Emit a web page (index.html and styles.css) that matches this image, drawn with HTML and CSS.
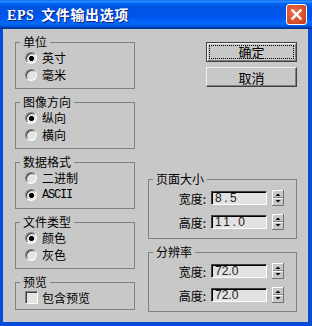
FILE: index.html
```html
<!DOCTYPE html>
<html lang="zh-CN">
<head>
    <meta charset="UTF-8">
    <meta name="viewport" content="width=device-width, initial-scale=1.0">
    <title>EPS 文件输出选项</title>
    <link rel="stylesheet" href="styles.css">
</head>
<body>
    <div class="window">
        <div class="titlebar">
            <span class="title"><span class="latin">EPS</span> 文件输出选项</span>
            <span class="close">
                <svg width="13" height="13" viewBox="0 0 13 13"><path d="M2.5 2.5 L10.5 10.5 M10.5 2.5 L2.5 10.5" stroke="#fff" stroke-width="2.4" stroke-linecap="square"/></svg>
            </span>
        </div>
        <div class="frame">
            <div class="client">
                <!-- 左侧选项 -->
                <div class="col-left">
                    <fieldset class="group">
                        <legend>单位</legend>
                        <div class="opt"><span class="radio checked"></span>英寸</div>
                        <div class="opt"><span class="radio"></span>毫米</div>
                    </fieldset>
                    <fieldset class="group">
                        <legend>图像方向</legend>
                        <div class="opt"><span class="radio checked"></span>纵向</div>
                        <div class="opt"><span class="radio"></span>横向</div>
                    </fieldset>
                    <fieldset class="group">
                        <legend>数据格式</legend>
                        <div class="opt"><span class="radio"></span>二进制</div>
                        <div class="opt"><span class="radio checked"></span><span class="mono">ASCII</span></div>
                    </fieldset>
                    <fieldset class="group">
                        <legend>文件类型</legend>
                        <div class="opt"><span class="radio checked"></span>颜色</div>
                        <div class="opt"><span class="radio"></span>灰色</div>
                    </fieldset>
                    <fieldset class="group group-last">
                        <legend>预览</legend>
                        <div class="opt"><span class="check"></span>包含预览</div>
                    </fieldset>
                </div>

                <!-- 右侧按钮和数值 -->
                <div class="col-right">
                    <div class="buttons">
                        <button class="btn btn-default"><span class="focus">确定</span></button>
                        <button class="btn">取消</button>
                    </div>
                    <div class="groups">
                        <fieldset class="group">
                            <legend>页面大小</legend>
                            <div class="field-row">
                                <span class="field-label">宽度:</span>
                                <span class="field wide">8.5</span>
                                <svg class="spin" width="12" height="16" viewBox="0 0 12 16"><rect width="12" height="16" fill="#c8c8c8"/><path d="M0.5 15V0.5H11" stroke="#fff" fill="none"/><path d="M11.5 0V15.5H0" stroke="#707070" fill="none"/><path d="M1 7.5H11" stroke="#808080"/><path d="M1 8.5H11" stroke="#fff"/><polygon points="3.5,6 8.5,6 6,3.5" fill="#000"/><polygon points="3.5,10 8.5,10 6,12.5" fill="#000"/></svg>
                            </div>
                            <div class="field-row">
                                <span class="field-label">高度:</span>
                                <span class="field wide">11.0</span>
                                <svg class="spin" width="12" height="16" viewBox="0 0 12 16"><rect width="12" height="16" fill="#c8c8c8"/><path d="M0.5 15V0.5H11" stroke="#fff" fill="none"/><path d="M11.5 0V15.5H0" stroke="#707070" fill="none"/><path d="M1 7.5H11" stroke="#808080"/><path d="M1 8.5H11" stroke="#fff"/><polygon points="3.5,6 8.5,6 6,3.5" fill="#000"/><polygon points="3.5,10 8.5,10 6,12.5" fill="#000"/></svg>
                            </div>
                        </fieldset>
                        <fieldset class="group">
                            <legend>分辨率</legend>
                            <div class="field-row">
                                <span class="field-label">宽度:</span>
                                <span class="field">72.0</span>
                                <svg class="spin" width="12" height="16" viewBox="0 0 12 16"><rect width="12" height="16" fill="#c8c8c8"/><path d="M0.5 15V0.5H11" stroke="#fff" fill="none"/><path d="M11.5 0V15.5H0" stroke="#707070" fill="none"/><path d="M1 7.5H11" stroke="#808080"/><path d="M1 8.5H11" stroke="#fff"/><polygon points="3.5,6 8.5,6 6,3.5" fill="#000"/><polygon points="3.5,10 8.5,10 6,12.5" fill="#000"/></svg>
                            </div>
                            <div class="field-row">
                                <span class="field-label">高度:</span>
                                <span class="field">72.0</span>
                                <svg class="spin" width="12" height="16" viewBox="0 0 12 16"><rect width="12" height="16" fill="#c8c8c8"/><path d="M0.5 15V0.5H11" stroke="#fff" fill="none"/><path d="M11.5 0V15.5H0" stroke="#707070" fill="none"/><path d="M1 7.5H11" stroke="#808080"/><path d="M1 8.5H11" stroke="#fff"/><polygon points="3.5,6 8.5,6 6,3.5" fill="#000"/><polygon points="3.5,10 8.5,10 6,12.5" fill="#000"/></svg>
                            </div>
                        </fieldset>
                    </div>
                </div>
            </div>
        </div>
    </div>
</body>
</html>
```

FILE: styles.css
```css
/* XP 风格对话框 */
body {
    margin: 0;
    font-family: "Noto Sans CJK SC", "Noto Sans", sans-serif;
    font-size: 12px;
    color: #000;
}
.window {
    width: 312px;
    height: 326px;
    display: flex;
    flex-direction: column;
}
.titlebar {
    height: 29px;
    display: flex;
    align-items: center;
    justify-content: space-between;
    padding: 0 5px 0 7px;
    background: linear-gradient(to bottom, #0058ee 0%, #3593ff 4%, #288eff 6%, #127dff 8%, #036ffc 10%, #0262ee 14%, #0057e5 20%, #0054e3 24%, #0055eb 56%, #005bf5 66%, #026afe 76%, #0062ef 86%, #0052d6 92%, #0040ab 94%, #003092 100%);
}
.title {
    color: #fff;
    font-weight: bold;
    font-size: 14px;
    line-height: 16px;
    letter-spacing: 0.6px;
    text-shadow: 1px 1px #0a1e7a;
}
.title .latin {
    font-family: "Liberation Serif", serif;
    margin-right: 3px;
}
.close {
    width: 21px;
    height: 21px;
    box-sizing: border-box;
    border: 1px solid #fff;
    border-radius: 3px;
    background: radial-gradient(circle at 40% 40%, #e8704c 0%, #d8502a 60%, #c23a16 100%);
    display: flex;
    align-items: center;
    justify-content: center;
}
.frame {
    flex: 1;
    background: #0a4ad8;
    padding: 0 4px 4px 3px;
    display: flex;
}
.client {
    flex: 1;
    background: #c8c8c8;
    display: flex;
    gap: 13px;
    padding: 6px 11px 10px 12px;
}
.col-left {
    width: 120px;
    display: flex;
    flex-direction: column;
    gap: 6px;
}
.col-right {
    flex: 1;
    display: flex;
    flex-direction: column;
}
.group {
    margin: 0;
    padding: 0 0 5px 0;
    border: 1px solid #808080;
    min-width: 0;
}
.group-last {
    padding-bottom: 3px;
}
.group legend {
    margin-left: 4px;
    padding: 0 3px;
    line-height: 14px;
    height: 14px;
}
.opt {
    height: 17px;
    display: flex;
    align-items: center;
    padding-left: 9px;
}
.radio {
    width: 12px;
    height: 12px;
    box-sizing: border-box;
    border-radius: 50%;
    border: 1px solid;
    border-color: #808080 #fff #fff #808080;
    box-shadow: inset 1px 1px #404040;
    background: #e4e4e4;
    margin-right: 5px;
}
.radio.checked {
    background: radial-gradient(circle at 55% 55%, #000 0 2.2px, #e4e4e4 2.8px);
}
.check {
    width: 13px;
    height: 13px;
    box-sizing: border-box;
    border: 1px solid;
    border-color: #808080 #fff #fff #808080;
    box-shadow: inset 1px 1px #404040;
    background: #e4e4e4;
    margin-right: 4px;
}
.mono {
    font-family: "Liberation Mono", monospace;
    font-size: 12px;
    letter-spacing: -1.2px;
}
.buttons {
    margin-top: 7px;
    display: flex;
    flex-direction: column;
    align-items: flex-end;
    gap: 5px;
}
.btn {
    width: 91px;
    height: 20px;
    box-sizing: border-box;
    padding: 0;
    font-family: inherit;
    font-size: 13px;
    color: #000;
    background: #c8c8c8;
    border: 1px solid;
    border-color: #f0f0f0 #404040 #404040 #f0f0f0;
    box-shadow: inset -1px -1px #808080;
}
.btn-default {
    display: flex;
    padding: 2px;
    border-color: #404040;
    box-shadow: inset 1px 1px #f0f0f0, inset -1px -1px #808080;
}
.focus {
    flex: 1;
    border: 1px dotted #000;
    display: flex;
    align-items: center;
    justify-content: center;
    line-height: 12px;
}
.groups {
    margin-top: auto;
    display: flex;
    flex-direction: column;
    gap: 6px;
}
.groups .group {
    padding-bottom: 4px;
}
.field-row {
    height: 24px;
    display: flex;
    align-items: center;
    justify-content: flex-end;
    padding-right: 12px;
}
.field-label {
    font-size: 12px;
}
.field {
    width: 56px;
    height: 14px;
    box-sizing: border-box;
    margin: 0 5px 0 5px;
    padding-left: 3px;
    border: 1px solid;
    border-color: #404040 #fff #fff #404040;
    box-shadow: inset 1px 1px #000;
    background: #e2e2e2;
    font-family: "Liberation Sans", sans-serif;
    font-size: 12px;
    line-height: 12px;
    color: #202020;
    overflow: hidden;
    white-space: nowrap;
}
.field.wide {
    letter-spacing: 2.5px;
}
.spin {
    display: block;
}
```
